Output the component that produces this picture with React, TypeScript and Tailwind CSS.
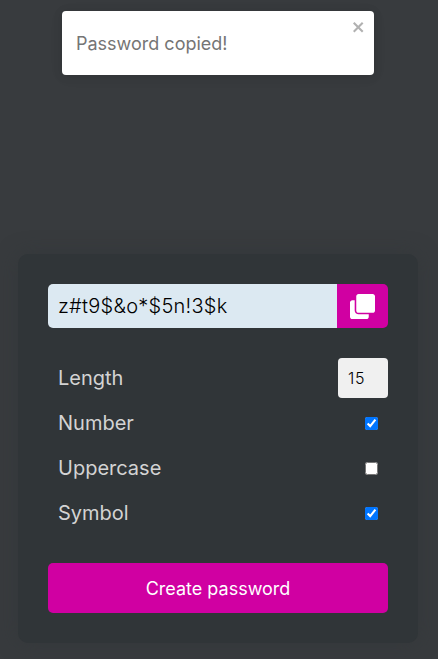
import { useState } from "react";
import { FaClone } from "react-icons/fa";

function Toast() {
  return (
    <div
      role="alert"
      className="absolute left-[62px] top-[11px] flex h-16 w-[312px] items-center rounded bg-white pl-[14px] text-[18px] text-[#757575] shadow-[0_1px_10px_0_rgba(0,0,0,0.1),0_2px_15px_0_rgba(0,0,0,0.05)]"
    >
      <span className="pt-[2px] leading-6">Password copied!</span>
      <button aria-label="close" className="absolute right-2 top-2 opacity-30">
        <svg viewBox="0 0 14 16" className="h-4 w-[14px]" fill="#000">
          <path
            fillRule="evenodd"
            d="M7.71 8.23l3.75 3.75-1.48 1.48-3.75-3.75-3.75 3.75L1 11.98l3.75-3.75L1 4.48 2.48 3l3.75 3.75L9.98 3l1.48 1.48-3.75 3.75z"
          />
        </svg>
      </button>
    </div>
  );
}

function CheckRow({ label, initial }: { label: string; initial: boolean }) {
  const [checked, setChecked] = useState(initial);
  return (
    <label className="flex h-[25px] items-center justify-between px-[10px]">
      <span>{label}</span>
      <input
        type="checkbox"
        className="mt-px h-[13px] w-[13px]"
        checked={checked}
        onChange={(e) => setChecked(e.target.checked)}
      />
    </label>
  );
}

export default function App() {
  return (
    <div className="relative h-[659px] w-full overflow-hidden bg-[#383b3e] px-[18px] pt-[254px] font-['Inter',sans-serif] text-xl text-[#d3d3d3]">
      <Toast />
      <main className="h-[389px] w-[400px] rounded-[10px] bg-[#303538] p-[30px] shadow-[0_0_20px_rgba(48,53,56,0.5)]">
        <div className="flex h-11 overflow-hidden rounded-[5px]">
          <input
            type="text"
            readOnly
            value="z#t9$&o*$5n!3$k"
            className="min-w-0 flex-1 bg-[#dce9f2] px-[10px] text-xl font-light tracking-[0.25px] text-black outline-none"
          />
          <button aria-label="Copy" className="flex w-[51px] items-center justify-center bg-[#d000a2] text-white">
            <FaClone className="h-[25px] w-[25px]" />
          </button>
        </div>
        <div className="mt-[30px] flex h-10 items-center justify-between pl-[10px]">
          <span>Length</span>
          <input
            type="text"
            readOnly
            value="15"
            className="h-10 w-[50px] rounded bg-[#f0f0f0] px-[10px] text-base font-light tracking-[0.7px] text-black outline-none"
          />
        </div>
        <div className="mt-3 flex flex-col gap-5">
          <CheckRow label="Number" initial={true} />
          <CheckRow label="Uppercase" initial={false} />
          <CheckRow label="Symbol" initial={true} />
        </div>
        <button className="mt-[38px] h-[50px] w-full rounded-[5px] bg-[#d000a2] pt-0.5 text-lg text-white">
          Create password
        </button>
      </main>
    </div>
  );
}
